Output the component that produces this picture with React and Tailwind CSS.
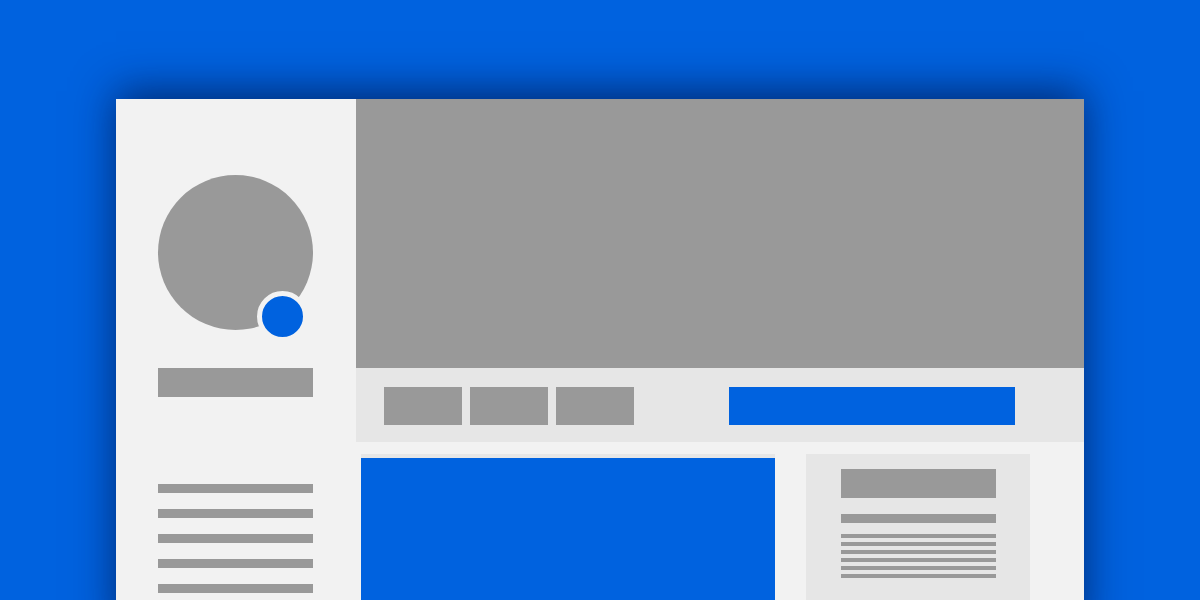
export default function App() {
  const sideLines = [0, 1, 2, 3, 4];
  const cardLines = [0, 1, 2, 3, 4, 5];

  return (
    <div className="h-[600px] w-full overflow-hidden bg-[#0062df] px-[116px] pt-[99px]">
      <div className="flex h-[540px] shadow-[0_-8px_40px_rgba(0,20,70,0.7)]">
        {/* sidebar */}
        <aside className="flex w-[240px] shrink-0 flex-col items-start bg-[#f2f2f2] pl-[42px] pt-[76px]">
          <div className="relative h-[155px] w-[155px] shrink-0 rounded-full bg-[#999999]">
            <span className="absolute left-[99px] top-[116px] h-[51px] w-[51px] rounded-full border-[5px] border-[#f2f2f2] bg-[#0062df]" />
          </div>
          <div className="mt-[38px] h-[29px] w-[155px] shrink-0 bg-[#999999]" />
          <div className="mt-[87px] flex flex-col gap-[16px]">
            {sideLines.map((i) => (
              <div key={i} className="h-[9px] w-[155px] bg-[#999999]" />
            ))}
          </div>
        </aside>

        {/* main */}
        <main className="flex flex-1 flex-col overflow-hidden bg-[#f2f2f2]">
          <div className="h-[269px] shrink-0 bg-[#999999]" />
          <div className="flex h-[74px] shrink-0 items-start bg-[#e6e6e6] pl-[28px] pt-[19px]">
            <div className="flex gap-[8px]">
              {[0, 1, 2].map((i) => (
                <div key={i} className="h-[38px] w-[78px] bg-[#999999]" />
              ))}
            </div>
            <div className="ml-[95px] h-[38px] w-[286px] bg-[#0062df]" />
          </div>
          <div className="flex shrink-0 items-start pl-[5px] pt-[12px]">
            <div className="h-[200px] w-[414px] border-t-4 border-[#e6e6e6] bg-[#0062df]" />
            <div className="ml-[31px] h-[200px] w-[224px] bg-[#e6e6e6] pl-[35px] pt-[15px]">
              <div className="h-[29px] w-[155px] bg-[#999999]" />
              <div className="mt-[16px] h-[9px] w-[155px] bg-[#999999]" />
              <div className="mt-[11px] flex flex-col gap-[4px]">
                {cardLines.map((i) => (
                  <div key={i} className="h-[4px] w-[155px] bg-[#999999]" />
                ))}
              </div>
            </div>
          </div>
        </main>
      </div>
    </div>
  );
}
